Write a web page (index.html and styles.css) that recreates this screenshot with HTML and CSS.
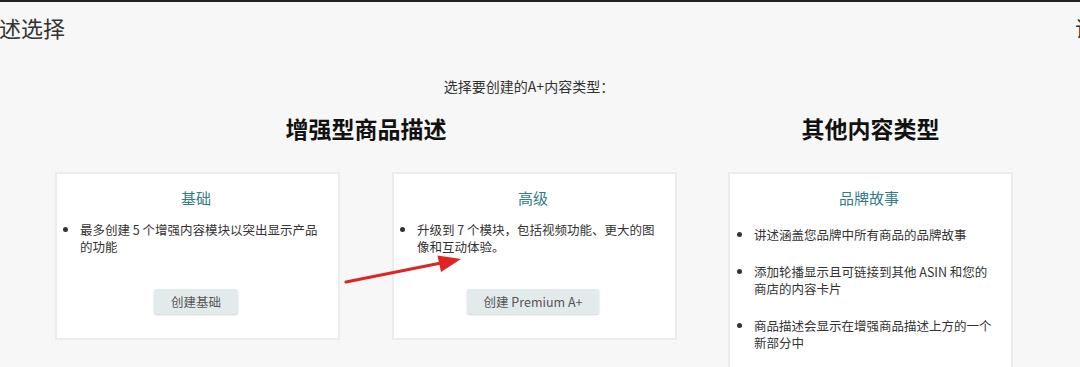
FILE: index.html
```html
<!DOCTYPE html>
<html lang="zh-CN">
<head>
<meta charset="utf-8">
<title>A+ 内容类型选择</title>
<link rel="stylesheet" href="styles.css">
</head>
<body>
<div class="page">
  <header class="topbar">
    <h1 class="page-title">描述选择</h1>
    <h1 class="page-title right">说明</h1>
  </header>

  <p class="intro">选择要创建的A+内容类型：</p>

  <div class="columns">
    <section class="section section-wide">
      <h2 class="section-title">增强型商品描述</h2>
      <div class="card-row">
        <div class="card card-fixed">
          <h3 class="card-title">基础</h3>
          <ul class="card-list">
            <li>最多创建 5 个增强内容模块以突出显示产品的功能</li>
          </ul>
          <button class="btn">创建基础</button>
        </div>
        <div class="card card-fixed">
          <h3 class="card-title">高级</h3>
          <ul class="card-list">
            <li>升级到 7 个模块，包括视频功能、更大的图像和互动体验。</li>
          </ul>
          <button class="btn">创建 Premium A+</button>
        </div>
      </div>
    </section>

    <section class="section">
      <h2 class="section-title">其他内容类型</h2>
      <div class="card card-tall">
        <h3 class="card-title">品牌故事</h3>
        <ul class="card-list spaced">
          <li>讲述涵盖您品牌中所有商品的品牌故事</li>
          <li>添加轮播显示且可链接到其他 ASIN 和您的商店的内容卡片</li>
          <li>商品描述会显示在增强商品描述上方的一个新部分中</li>
        </ul>
      </div>
    </section>
  </div>

  <svg class="arrow" width="1080" height="367" viewBox="0 0 1080 367" aria-hidden="true">
    <line x1="346" y1="282" x2="446" y2="262" stroke="#e02424" stroke-width="3.2" stroke-linecap="round"/>
    <polygon points="461,259 437.5,255.5 441,272" fill="#e02424"/>
  </svg>
</div>
</body>
</html>
```

FILE: styles.css
```css
* { box-sizing: border-box; }

html, body {
  margin: 0;
  padding: 0;
}

body {
  background: #f7f7f7;
  border-top: 2px solid #232323;
  overflow: hidden;
  font-family: "Noto Sans CJK SC", "Open Sans", "Noto Sans", sans-serif;
  color: #333;
}

.page {
  position: relative;
  width: 1080px;
  height: 365px;
  overflow: hidden;
}

.topbar {
  display: flex;
  justify-content: space-between;
  padding-top: 9px;
  margin-left: -23px;
  margin-right: -39px;
}

.page-title {
  margin: 0;
  font-size: 22px;
  line-height: 32px;
  font-weight: 400;
  color: #333;
  white-space: nowrap;
}

.intro {
  margin: 33px 0 0 55px;
  width: 958px;
  padding-right: 10px;
  text-align: center;
  font-size: 14px;
  line-height: 20px;
  color: #333;
}

.columns {
  display: flex;
  gap: 51px;
  margin: 16px 0 0 55px;
}

.section { width: 285px; }
.section-wide { width: 622px; }

.section-title {
  margin: 0 0 28px;
  text-align: center;
  font-size: 23px;
  line-height: 32px;
  font-weight: 700;
  color: #111;
}

.card-row {
  display: flex;
  gap: 52px;
}

.card {
  width: 285px;
  background: #fff;
  border: 2px solid #ececec;
  padding: 13px 14px 0 11px;
  display: flex;
  flex-direction: column;
}

.card-fixed { height: 168px; }
.card-tall { height: 230px; }

.card-title {
  margin: 0;
  text-align: center;
  font-size: 15px;
  line-height: 22px;
  font-weight: 400;
  color: #2f7d88;
}

.card-list {
  margin: 12px 0 0;
  padding-left: 12px;
  font-size: 12.5px;
  line-height: 17px;
  color: #333;
}

.card-list.spaced {
  margin-top: 17px;
  padding-left: 13px;
}

.card-list.spaced li + li {
  margin-top: 20px;
}

.btn {
  align-self: center;
  margin-top: auto;
  margin-bottom: 24px;
  padding: 4px 17px;
  border: 0;
  border-radius: 2px;
  background: #e3eaec;
  box-shadow: 0 1px 2px rgba(0, 0, 0, 0.18);
  font-family: "Noto Sans CJK SC", "Open Sans", sans-serif;
  font-size: 12.5px;
  line-height: 17px;
  color: #555;
}

.arrow {
  position: absolute;
  left: 0;
  top: -2px;
  pointer-events: none;
}
```
